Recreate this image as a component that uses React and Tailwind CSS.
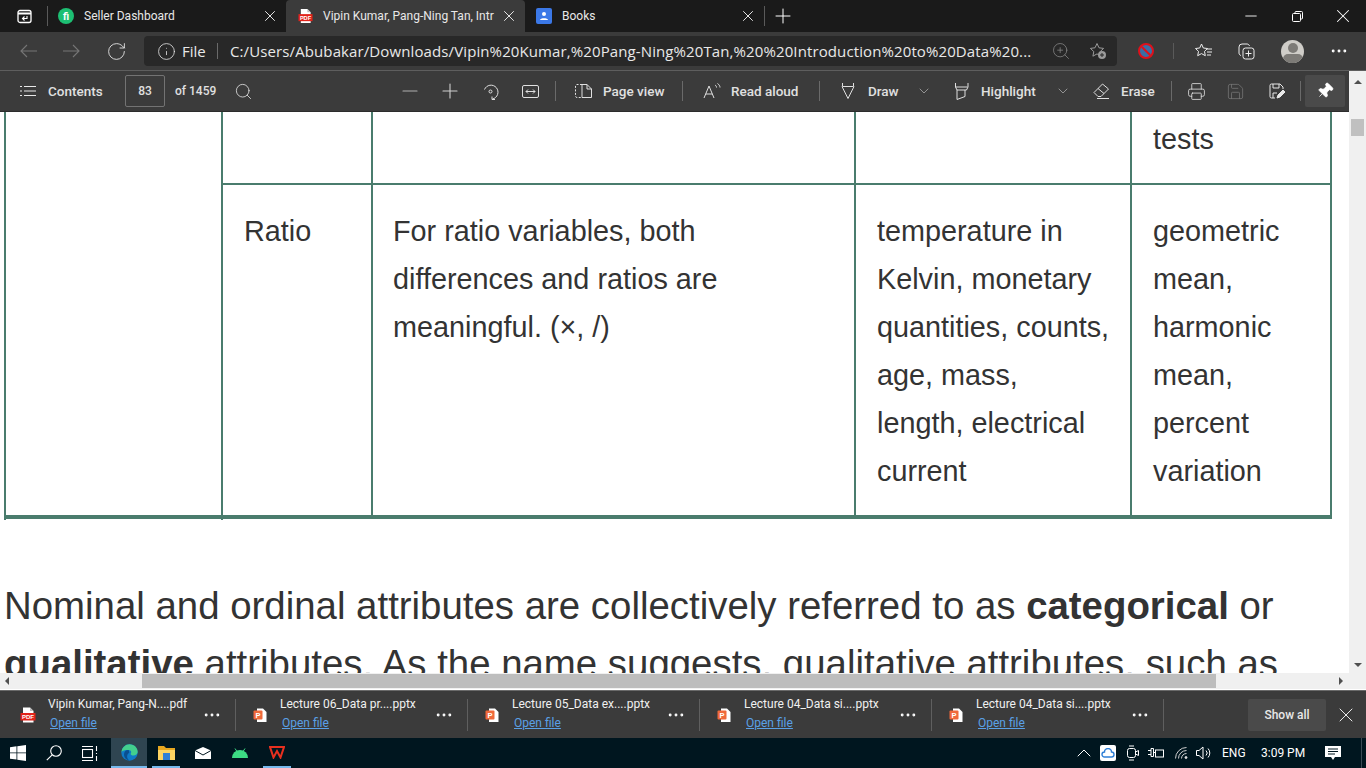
import React from 'react';
import { RotateCw, Info, X, Plus, Minus, Search, ZoomIn, ChevronDown, ChevronUp, Printer, Save, Pin, MoreHorizontal } from 'lucide-react';

const Sep = ({ className = '' }) => <div className={`w-px h-[20px] bg-[#6a6a6a] shrink-0 ${className}`}></div>;

const PdfIcon = ({ big }) => (
  <svg width={big ? 16 : 15} height="16" viewBox="0 0 16 16" className="shrink-0">
    <path d="M3 0.5h7l3.5 3.5v11.5H3z" fill="#fff" />
    <path d="M10 0.5v3.5h3.5" fill="#bbb" />
    <rect x="0.5" y="6" width="15" height="7.5" fill="#e2231a" />
    <text x="8" y="12" textAnchor="middle" fontSize="6" fontWeight="700" fill="#fff" fontFamily="Liberation Sans, sans-serif">PDF</text>
  </svg>
);

const PptIcon = () => (
  <svg width="14" height="16" viewBox="0 0 14 16" className="shrink-0">
    <path d="M4 1.5h6l3.5 3.5v10H4z" fill="#fff" />
    <rect x="0.5" y="3.5" width="9" height="9" rx="1" fill="#f0693a" />
    <text x="5" y="10.5" textAnchor="middle" fontSize="7.5" fontWeight="700" fill="#fff" fontFamily="Liberation Sans, sans-serif">P</text>
  </svg>
);

const NavArrow = ({ flip, className = '' }) => (
  <svg width="17" height="14" viewBox="0 0 17 14" fill="none" stroke="#767676" strokeWidth="1.1" className={`shrink-0 ${flip ? 'rotate-180' : ''} ${className}`}>
    <path d="M17 7H1M7 1 1 7l6 6" />
  </svg>
);

function TabBar() {
  return (
    <div className="h-[32px] bg-[#1a1a1a] flex items-center text-[12px] text-[#e8e8e8] shrink-0">
      <div className="w-[47px] flex justify-center pl-[1px] shrink-0">
        <svg width="15" height="15" viewBox="0 0 15 15" fill="none" stroke="#fff" strokeWidth="1.3">
          <rect x="1" y="1.5" width="13" height="12" rx="2" />
          <path d="M1 4.5h13" strokeWidth="2" />
          <path d="M10 7v2.5H5.5M7.5 7.5 5.5 9.5l2 2" strokeWidth="1.1" />
        </svg>
      </div>
      <div className="w-px h-[20px] bg-[#5a5a5a] shrink-0"></div>
      <div className="w-[238px] h-full flex items-center pl-[10px] shrink-0">
        <div className="w-[16px] h-[16px] rounded-full bg-[#1dbf73] flex items-center justify-center text-white text-[10px] font-bold">fi</div>
        <span className="ml-[10px]">Seller Dashboard</span>
        <X size={18} strokeWidth={1.3} className="ml-auto mr-[7px]" />
      </div>
      <div className="w-[239px] h-full bg-[#3b3b3b] rounded-t-[4px] flex items-center pl-[12px] shrink-0">
        <PdfIcon />
        <span className="ml-[10px] w-[173px] whitespace-nowrap">Vipin Kumar, Pang-Ning Tan, Intr</span>
        <X size={18} strokeWidth={1.3} className="ml-[4px]" />
      </div>
      <div className="w-[239px] h-full flex items-center pl-[11px] shrink-0">
        <div className="w-[16px] h-[16px] rounded-[2px] bg-[#3b78e7] flex items-center justify-center">
          <svg width="10" height="10" viewBox="0 0 10 10" fill="#fff"><circle cx="5" cy="3" r="2" /><path d="M1 9c0-2.5 8-2.5 8 0z" /></svg>
        </div>
        <span className="ml-[10px]">Books</span>
        <X size={18} strokeWidth={1.3} className="ml-auto mr-[7px]" />
      </div>
      <div className="w-px h-[20px] bg-[#5a5a5a] shrink-0"></div>
      <Plus size={24} strokeWidth={1} className="ml-[6px] text-white" />
      <div className="ml-auto flex items-center text-white">
        <div className="w-[46px] flex justify-center"><Minus size={18} strokeWidth={1.2} /></div>
        <div className="w-[46px] flex justify-center">
          <svg width="11" height="11" viewBox="0 0 11 11" fill="none" stroke="#fff"><rect x="0.5" y="2.5" width="8" height="8" rx="1" /><path d="M3 2.5v-1a1 1 0 0 1 1-1h5.5a1 1 0 0 1 1 1V7a1 1 0 0 1-1 1h-1" /></svg>
        </div>
        <div className="w-[46px] flex justify-center"><X size={22} strokeWidth={1.1} /></div>
      </div>
    </div>
  );
}

function AddressBar() {
  return (
    <div className="h-[39px] bg-[#3b3b3b] border-b border-[#5e5e5e] flex items-center shrink-0 text-[#e8e8e8]">
      <NavArrow className="ml-[20px]" />
      <NavArrow flip className="ml-[26px]" />
      <RotateCw size={21} strokeWidth={1} className="ml-[26px] text-[#e8e8e8] shrink-0" />
      <div className="ml-[17px] w-[973px] h-[30px] bg-[#282828] rounded-[4px] flex items-center shrink-0 font-['Open_Sans',sans-serif]">
        <Info size={19} strokeWidth={1} className="ml-[13px] shrink-0" />
        <span className="ml-[6px] w-[26px] text-[15px]">File</span>
        <div className="ml-[9px] w-px h-[16px] bg-[#6a6a6a] shrink-0"></div>
        <span className="ml-[12px] text-[15px] tracking-[0.11px] whitespace-nowrap w-[808px] shrink-0">C:/Users/Abubakar/Downloads/Vipin%20Kumar,%20Pang-Ning%20Tan,%20%20Introduction%20to%20Data%20...</span>
        <ZoomIn size={20} strokeWidth={0.9} className="ml-[13px] text-[#8a8a8a] shrink-0" />
        <svg width="18" height="18" viewBox="0 0 18 18" fill="none" stroke="#9a9a9a" strokeWidth="1" className="ml-[18px] shrink-0"><path d="M8 1.5l2 4.3 4.6.6-3.4 3.2.9 4.6L8 11.9l-4.1 2.3.9-4.6L1.4 6.4 6 5.8z" /><circle cx="13" cy="13" r="4" fill="#9a9a9a" stroke="none" /><path d="M13 11v4M11 13h4" stroke="#282828" /></svg>
      </div>
      <div className="ml-[21px] w-[16px] h-[16px] rounded-full border-2 border-[#e0101a] bg-[#3a6ea5] flex items-center justify-center overflow-hidden shrink-0">
        <div className="w-[16px] h-[2px] bg-[#e0101a] rotate-45 shrink-0"></div>
      </div>
      <div className="ml-[19px] w-px h-[16px] bg-[#5a5a5a] shrink-0"></div>
      <svg width="20" height="16" viewBox="0 0 18 16" fill="none" stroke="#eee" strokeWidth="1" className="ml-[20px] shrink-0"><path d="M6.5 1l1.8 4 4.2.5-3 2.900.8 4.300-3.800-2.100-3.800 2.100.8-4.300-3-2.900 4.200-.5z" /><path d="M12 6h5M12 9h5M12 12h4" /></svg>
      <svg width="17" height="17" viewBox="0 0 17 17" fill="none" stroke="#eee" strokeWidth="1" className="ml-[24px] shrink-0"><path d="M3 12.500c-1.200-.3-2-1.200-2-2.500V4a3 3 0 0 1 3-3h5c1.200 0 2.100.8 2.500 2" /><rect x="5" y="5" width="11" height="11" rx="2.500" /><path d="M10.500 7.500v6M7.500 10.500h6" /></svg>
      <div className="ml-[26px] w-[23px] h-[23px] rounded-full bg-[#cfcdc8] flex flex-col items-center overflow-hidden shrink-0">
        <div className="w-[10px] h-[10px] rounded-full bg-[#7d7b77] mt-[3px] shrink-0"></div>
        <div className="w-[20px] h-[10px] rounded-full bg-[#7d7b77] mt-[1px] shrink-0"></div>
      </div>
      <MoreHorizontal size={20} strokeWidth={1.5} className="ml-[25px] text-white shrink-0" />
    </div>
  );
}

function PdfToolbar() {
  return (
    <div className="h-[41px] bg-[#3b3b3b] flex items-center shrink-0 text-[13.5px] font-medium text-[#e0e0e0] border-b border-[#2c2c2c]">
      <svg width="16" height="12" viewBox="0 0 16 12" stroke="#e8e8e8" className="ml-[20px] shrink-0"><path d="M0 1.500h2M4 1.500h12M0 6h2M4 6h12M0 10.500h2M4 10.500h12" /></svg>
      <span className="ml-[12px] w-[77px]">Contents</span>
      <div className="w-[40px] h-[32px] border border-[#737373] rounded-[2px] flex items-center justify-center text-[12px] shrink-0">83</div>
      <span className="ml-[10px] w-[45px] text-[12px] whitespace-nowrap">of 1459</span>
      <Search size={19} strokeWidth={1} className="ml-[14px] text-[#e8e8e8] shrink-0" />
      <Minus size={24} strokeWidth={1.1} className="ml-[145px] text-[#b0b0b0] shrink-0" />
      <Plus size={24} strokeWidth={1.1} className="ml-[16px] text-[#d0d0d0] shrink-0" />
      <svg width="17" height="17" viewBox="0 0 17 17" fill="none" stroke="#e0e0e0" strokeWidth="1" className="ml-[20px] shrink-0"><path d="M2.500 6.500a7 7 0 1 1 8 9.500" /><circle cx="8.500" cy="8.500" r="1.500" /><path d="M10 13.500v3h3" /></svg>
      <svg width="17" height="13" viewBox="0 0 17 13" fill="none" stroke="#e0e0e0" strokeWidth="1" className="ml-[23px] shrink-0"><rect x="0.500" y="0.500" width="16" height="12" rx="1.500" /><path d="M4 6.500h9M6 4.500l-2 2 2 2M11 4.500l2 2-2 2" /></svg>
      <Sep className="ml-[16px]" />
      <svg width="17" height="14" viewBox="0 0 17 14" fill="none" stroke="#e0e0e0" strokeWidth="1" className="ml-[19px] shrink-0"><path d="M7 .500H2a1.500 1.500 0 0 0-1.500 1.500v10A1.500 1.500 0 0 0 2 13.500h5" strokeDasharray="2 1.500" /><path d="M7 .500h5l4.500 4.500v8.500H7zM12 .500V5h4.500" /></svg>
      <span className="ml-[11px] w-[62px] whitespace-nowrap">Page view</span>
      <Sep className="ml-[17px]" />
      <svg width="18" height="16" viewBox="0 0 18 16" fill="none" stroke="#e0e0e0" strokeWidth="1" className="ml-[20px] shrink-0"><path d="M1 15 6 3l5 12M2.800 11h6.400M12 2c1 .6 1.500 1.500 1.500 2.500M14.500 .500c1.500 1 2.500 2.500 2.500 4" /></svg>
      <span className="ml-[10px] w-[70px] whitespace-nowrap">Read aloud</span>
      <Sep className="ml-[18px]" />
      <svg width="16" height="16" viewBox="0 0 16 16" fill="none" stroke="#e0e0e0" strokeWidth="1" className="ml-[20px] shrink-0"><path d="M2.500 0v3.500h11V0M2 3.500l6 12 6-12" /></svg>
      <span className="ml-[12px] w-[32px]">Draw</span>
      <ChevronDown size={16} strokeWidth={1} className="ml-[16px] text-[#c0c0c0] shrink-0" />
      <svg width="15" height="17" viewBox="0 0 15 17" fill="none" stroke="#e0e0e0" strokeWidth="1" className="ml-[22px] shrink-0"><path d="M1.500 0v4l1.500 3h9.500l1.500-3V0M1.500 4h12M3 7v9.500l8-3V7" /></svg>
      <span className="ml-[12px] w-[60px]">Highlight</span>
      <ChevronDown size={16} strokeWidth={1} className="ml-[14px] text-[#c0c0c0] shrink-0" />
      <svg width="17" height="16" viewBox="0 0 17 16" fill="none" stroke="#e0e0e0" strokeWidth="1" className="ml-[22px] shrink-0"><path d="M1 9.500 9.500 1l6 5L8 13.500H5zM5 5.500l6 5M4 15.500h12" /></svg>
      <span className="ml-[11px] w-[33px]">Erase</span>
      <Sep className="ml-[17px]" />
      <Printer size={19} strokeWidth={1} className="ml-[15px] text-[#e8e8e8] shrink-0" />
      <Save size={19} strokeWidth={1} className="ml-[20px] text-[#767676] shrink-0" />
      <svg width="16" height="16" viewBox="0 0 16 16" fill="none" stroke="#e8e8e8" strokeWidth="1" className="ml-[24px] shrink-0"><path d="M6 15H2.500A1.500 1.500 0 0 1 1 13.500V2.500A1.500 1.500 0 0 1 2.500 1h8.500L14 4v2M4 1v4h6V1M4 15v-5h4" /><path d="M8 15l1-3 5-5 2 2-5 5z" fill="#e8e8e8" /></svg>
      <Sep className="ml-[15px]" />
      <div className="ml-[4px] w-[40px] h-[32px] bg-[#4a4a4a] rounded-[2px] flex items-center justify-center shrink-0">
        <Pin size={18} fill="#fff" strokeWidth={1} className="text-white rotate-45" />
      </div>
    </div>
  );
}

const cellText = 'text-[#333333] text-[28.8px] leading-[48px]';

function PageContent() {
  return (
    <div className="flex-1 min-h-0 bg-white overflow-hidden font-['Liberation_Sans',sans-serif]">
      <div className="ml-[4px] w-[1328px] grid grid-cols-[217px_150px_483px_276px_202px] grid-rows-[71px_auto]">
        <div className="row-span-2 border-l-2 border-[#4a7c6d]"></div>
        <div className="border-l-2 border-[#4a7c6d]"></div>
        <div className="border-l-2 border-[#4a7c6d]"></div>
        <div className="border-l-2 border-[#4a7c6d]"></div>
        <div className={`border-x-2 border-[#4a7c6d] pl-[21px] pt-[3px] ${cellText}`}>tests</div>
        <div className={`col-start-2 border-l-2 border-t-2 border-[#4a7c6d] pl-[21px] pt-[22px] pb-[20px] ${cellText}`}>Ratio</div>
        <div className={`border-l-2 border-t-2 border-[#4a7c6d] pl-[20px] pt-[22px] ${cellText}`}>
          For ratio variables, both<br />differences and ratios are<br />meaningful. (×, /)
        </div>
        <div className={`border-l-2 border-t-2 border-[#4a7c6d] pl-[21px] pt-[22px] pb-[20px] ${cellText}`}>
          temperature in<br />Kelvin, monetary<br />quantities, counts,<br />age, mass,<br />length, electrical<br />current
        </div>
        <div className={`border-x-2 border-t-2 border-[#4a7c6d] pl-[21px] pt-[22px] pb-[20px] ${cellText}`}>
          geometric<br />mean,<br />harmonic<br />mean,<br />percent<br />variation
        </div>
        <div className="col-span-5 h-[4px] bg-[#4a7c6d] relative">
          <div className="absolute left-0 top-[4px] w-[2px] h-[1px] bg-[#4a7c6d]"></div>
          <div className="absolute left-[217px] top-[4px] w-[2px] h-[1px] bg-[#4a7c6d]"></div>
        </div>
      </div>
      <p className="ml-[4px] mt-[58px] w-[1320px] text-[#333333] text-[38.4px] leading-[57.6px]">
        Nominal and ordinal attributes are collectively referred to as <b>categorical</b> or <b>qualitative</b> attributes. As the name suggests, qualitative attributes, such as
      </p>
    </div>
  );
}

function VScroll() {
  return (
    <div className="w-[17px] bg-[#f0f0f0] flex flex-col items-center shrink-0">
      <div className="mt-[9px] w-0 h-0 border-x-[4px] border-x-transparent border-b-[4px] border-b-[#505050]"></div>
      <div className="mt-[35px] w-[13px] h-[17px] bg-[#c0c0c0]"></div>
      <div className="mt-auto mb-[6px] w-0 h-0 border-x-[4px] border-x-transparent border-t-[4px] border-t-[#505050]"></div>
    </div>
  );
}

function HScroll() {
  return (
    <div className="h-[17px] bg-[#f0f0f0] flex items-center shrink-0 border-b border-white">
      <div className="ml-[5px] w-0 h-0 border-y-[4px] border-y-transparent border-r-[4px] border-r-[#505050]"></div>
      <div className="ml-[133px] w-[1074px] h-[14px] bg-[#bdbdbd]"></div>
      <div className="ml-[123px] w-0 h-0 border-y-[4px] border-y-transparent border-l-[4px] border-l-[#505050]"></div>
    </div>
  );
}

const downloads = [
  { name: 'Vipin Kumar, Pang-N....pdf', pdf: true },
  { name: 'Lecture 06_Data pr....pptx' },
  { name: 'Lecture 05_Data ex....pptx' },
  { name: 'Lecture 04_Data si....pptx' },
  { name: 'Lecture 04_Data si....pptx' },
];

function DownloadBar() {
  return (
    <div className="h-[48px] bg-[#3b3b3b] flex items-center shrink-0 text-[12px] text-[#f0f0f0] pl-[4px] border-t border-[#6a6a6a]">
      {downloads.map((d, i) => (
        <div key={i} className="w-[232px] h-[32px] flex items-center border-r border-[#5f5f5f] shrink-0">
          <div className="w-[44px] flex justify-start pl-[16px] shrink-0">{d.pdf ? <PdfIcon big /> : <span className="ml-[1px]"><PptIcon /></span>}</div>
          <div className="w-[154px] leading-[16px] -mt-[3px] shrink-0">
            <div className="whitespace-nowrap">{d.name}</div>
            <div className="ml-[2px] mt-[3px] text-[#5aa0e6] underline">Open file</div>
          </div>
          <MoreHorizontal size={20} strokeWidth={1.5} className="text-white shrink-0" />
        </div>
      ))}
      <div className="ml-[84px] w-[78px] h-[32px] bg-[#4a4a4a] rounded-[2px] flex items-center justify-center font-medium text-[#e8e8e8] shrink-0">Show all</div>
      <X size={24} strokeWidth={0.9} className="ml-[8px] text-white shrink-0" />
    </div>
  );
}

function Taskbar() {
  return (
    <div className="h-[30px] bg-[#00161f] flex items-center shrink-0 text-white text-[12px]">
      <svg width="16" height="16" viewBox="0 0 16 16" fill="#fff" className="ml-[10px] shrink-0"><path d="M0 2.200 6.500 1.300v6.200H0zM7.300 1.200 16 0v7.500H7.300zM0 8.300h6.500v6.300L0 13.700zM7.300 8.300H16V16l-8.700-1.200z" /></svg>
      <svg width="16" height="16" viewBox="0 0 16 16" fill="none" stroke="#fff" strokeWidth="1.100" className="ml-[20px] shrink-0"><circle cx="10" cy="6" r="5.300" /><path d="M6.200 9.800.8 15.200" /></svg>
      <svg width="16" height="15" viewBox="0 0 16 15" fill="none" stroke="#fff" strokeWidth="1.100" className="ml-[20px] shrink-0"><path d="M0 .5h11M0 14.500h11" /><rect x=".5" y="3.500" width="10" height="8" /><path d="M14.500 0v5M14.500 7v1M14.500 10v5" /></svg>
      <div className="ml-[13px] w-[36px] h-[30px] bg-[#2f4551] border-b-2 border-[#76b9ed] flex items-center justify-center shrink-0">
        <svg width="17" height="17" viewBox="0 0 17 17">
          <circle cx="8.500" cy="8.500" r="8.200" fill="#0f7ac6" />
          <path d="M.5 8C1 3.500 4.500.3 8.500.3c4.800 0 8.200 3.700 8.200 7.400 0 2.300-2 3.800-4.300 3.800-1.500 0-2.800-.7-2.800-1.800 1-.7 1.200-3.300-2-3.600C4.500 5.900 2 6.500.5 8z" fill="#43cf8d" />
          <path d="M7.700 6.100C4.800 5.900 3 8 3 10.500c0 3 2.500 5.700 5.500 6-2-1.200-2.800-3.300-2.200-5.300.3-1 1-2 2-2.500z" fill="#0a4f8f" />
        </svg>
      </div>
      <div className="ml-[5px] w-[28px] h-[30px] border-b-2 border-[#76b9ed] flex items-center justify-center shrink-0">
        <svg width="17" height="15" viewBox="0 0 17 15"><path d="M0 1h6l2 2h9v3H0z" fill="#e8a820" /><path d="M0 5h17v10H0z" fill="#fcd462" /><rect x="5" y="8" width="7" height="7" fill="#2f7fd6" /></svg>
      </div>
      <svg width="16" height="12" viewBox="0 0 16 12" className="ml-[15px] shrink-0"><path d="M0 3.500 8 0l8 3.500V12H0z" fill="#fff" /><path d="M0 3.500 8 8l8-4.500" fill="none" stroke="#00161f" /></svg>
      <svg width="16" height="10" viewBox="0 0 16 10" fill="#3ddc84" className="ml-[21px] shrink-0"><path d="M0 10a8 8 0 0 1 16 0z" /><path d="M3 .5l2 3M13 .5l-2 3" stroke="#3ddc84" /></svg>
      <div className="ml-[15px] w-[28px] h-[30px] border-b-2 border-[#76b9ed] flex items-center justify-center shrink-0">
        <svg width="16" height="13" viewBox="0 0 16 13" fill="none" stroke="#e8301f" strokeWidth="2"><path d="M1 1h14l-3.500 10.500L8 5l-3.500 6.500z" /></svg>
      </div>
      <ChevronUp size={24} strokeWidth={1} className="ml-[781px] shrink-0" />
      <div className="ml-[4px] w-[16px] h-[16px] bg-white rounded-[2px] flex items-center justify-center shrink-0">
        <svg width="14" height="10" viewBox="0 0 14 10" fill="none" stroke="#2f7fd6" strokeWidth="1.400"><path d="M3.500 9a2.500 2.500 0 0 1 0-5 3.500 3.500 0 0 1 7 0 2.500 2.500 0 0 1 0 5z" /></svg>
      </div>
      <svg width="12" height="16" viewBox="0 0 12 16" fill="none" stroke="#fff" className="ml-[11px] shrink-0"><rect x=".5" y="3.500" width="8" height="9" rx="2" /><path d="M8.500 7l3-1.500v5l-3-1.500M2 1h5M2 15h5" /></svg>
      <svg width="16" height="12" viewBox="0 0 16 12" fill="none" stroke="#fff" className="ml-[9px] shrink-0"><path d="M0 3.500h3M0 7.500h3M3 1.500h2.500v8H3zM5.500 5.500h2" /><rect x="7.500" y="3" width="8" height="7" /></svg>
      <svg width="13" height="12" viewBox="0 0 13 12" fill="none" stroke="#cfcfcf" className="ml-[11px] shrink-0"><path d="M.5 11.500a11 11 0 0 1 11-11M3.500 11.500a8 8 0 0 1 8-8M6.500 11.500a5 5 0 0 1 5-5" /><circle cx="11" cy="10.500" r="1" fill="#fff" /></svg>
      <svg width="16" height="14" viewBox="0 0 16 14" fill="none" stroke="#fff" className="ml-[8px] shrink-0"><path d="M.5 4.500h2.500L7 1v12L3 9.500H.5zM10 4.500a3.500 3.500 0 0 1 0 5M12 2.500a6.500 6.500 0 0 1 0 9" /></svg>
      <span className="ml-[10px] w-[39px]">ENG</span>
      <span className="w-[64px]">3:09 PM</span>
      <svg width="16" height="16" viewBox="0 0 16 16" fill="#fff" className="shrink-0"><path d="M0 1h16v11H10l-2 3-2-3H0z" /><path d="M3 4h10M3 6.500h10M3 9h7" stroke="#00161f" /></svg>
      <div className="ml-[20px] w-px h-full bg-[#3a4b55]"></div>
    </div>
  );
}

function App() {
  return (
    <div className="w-[1366px] h-[768px] overflow-hidden flex flex-col font-['Roboto',sans-serif]">
      <TabBar />
      <AddressBar />
      <div className="flex-1 min-h-0 flex">
        <div className="flex-1 min-w-0 flex flex-col">
          <PdfToolbar />
          <PageContent />
        </div>
        <VScroll />
      </div>
      <HScroll />
      <DownloadBar />
      <Taskbar />
    </div>
  );
}

export default App;
